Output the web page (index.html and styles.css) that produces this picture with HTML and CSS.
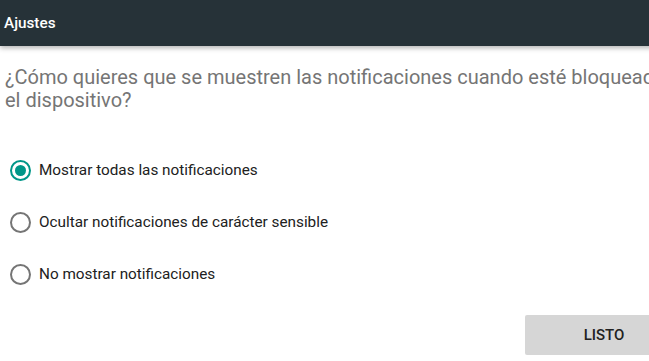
FILE: index.html
```html
<!DOCTYPE html>
<html lang="es">
<head>
<meta charset="utf-8">
<title>Ajustes</title>
<link rel="stylesheet" href="styles.css">
</head>
<body>
<div class="screen">
  <header class="appbar">
    <span class="appbar-title">Ajustes</span>
  </header>
  <main class="dialog">
    <p class="question">¿Cómo quieres que se muestren las notificaciones cuando esté bloqueado el dispositivo?</p>
    <ul class="options">
      <li class="option">
        <span class="radio checked"><span class="dot"></span></span>
        <span class="label">Mostrar todas las notificaciones</span>
      </li>
      <li class="option">
        <span class="radio"></span>
        <span class="label">Ocultar notificaciones de carácter sensible</span>
      </li>
      <li class="option">
        <span class="radio"></span>
        <span class="label">No mostrar notificaciones</span>
      </li>
    </ul>
    <div class="actions">
      <button class="btn">LISTO</button>
    </div>
  </main>
</div>
</body>
</html>
```

FILE: styles.css
```css
html, body {
  margin: 0;
  padding: 0;
  background: #ffffff;
  overflow: hidden;
}
body {
  width: 649px;
  height: 361px;
  font-family: Roboto, "Noto Sans", sans-serif;
}
.screen {
  width: 700px;
}
.appbar {
  height: 46px;
  background: #263238;
  display: flex;
  align-items: center;
  padding-left: 4px;
  box-shadow: 0 2px 5px rgba(0, 0, 0, 0.3);
  position: relative;
}
.appbar-title {
  color: #ffffff;
  font-size: 15.3px;
  font-weight: 500;
  margin-top: -1px;
}
.dialog {
  padding-left: 5px;
}
.question {
  margin: 0;
  padding-top: 20px;
  width: 670px;
  font-size: 20px;
  line-height: 23px;
  color: #757575;
}
.options {
  list-style: none;
  margin: 0;
  padding: 0;
  padding-top: 32px;
}
.option {
  display: flex;
  align-items: center;
  height: 52px;
}
.radio {
  box-sizing: border-box;
  width: 21px;
  height: 21px;
  margin-left: 5px;
  border: 2px solid #757575;
  border-radius: 50%;
  display: flex;
  align-items: center;
  justify-content: center;
}
.radio.checked {
  border-color: #009688;
}
.dot {
  width: 11px;
  height: 11px;
  border-radius: 50%;
  background: #009688;
}
.label {
  margin-left: 8px;
  font-size: 15.3px;
  color: #212121;
}
.actions {
  display: flex;
  justify-content: flex-end;
  width: 678px;
  padding-top: 15px;
}
.btn {
  width: 158px;
  height: 40px;
  border: none;
  border-radius: 2px;
  background: #d6d6d6;
  font-family: Roboto, "Noto Sans", sans-serif;
  font-size: 15px;
  font-weight: 500;
  color: #212121;
  padding: 0;
}
```
